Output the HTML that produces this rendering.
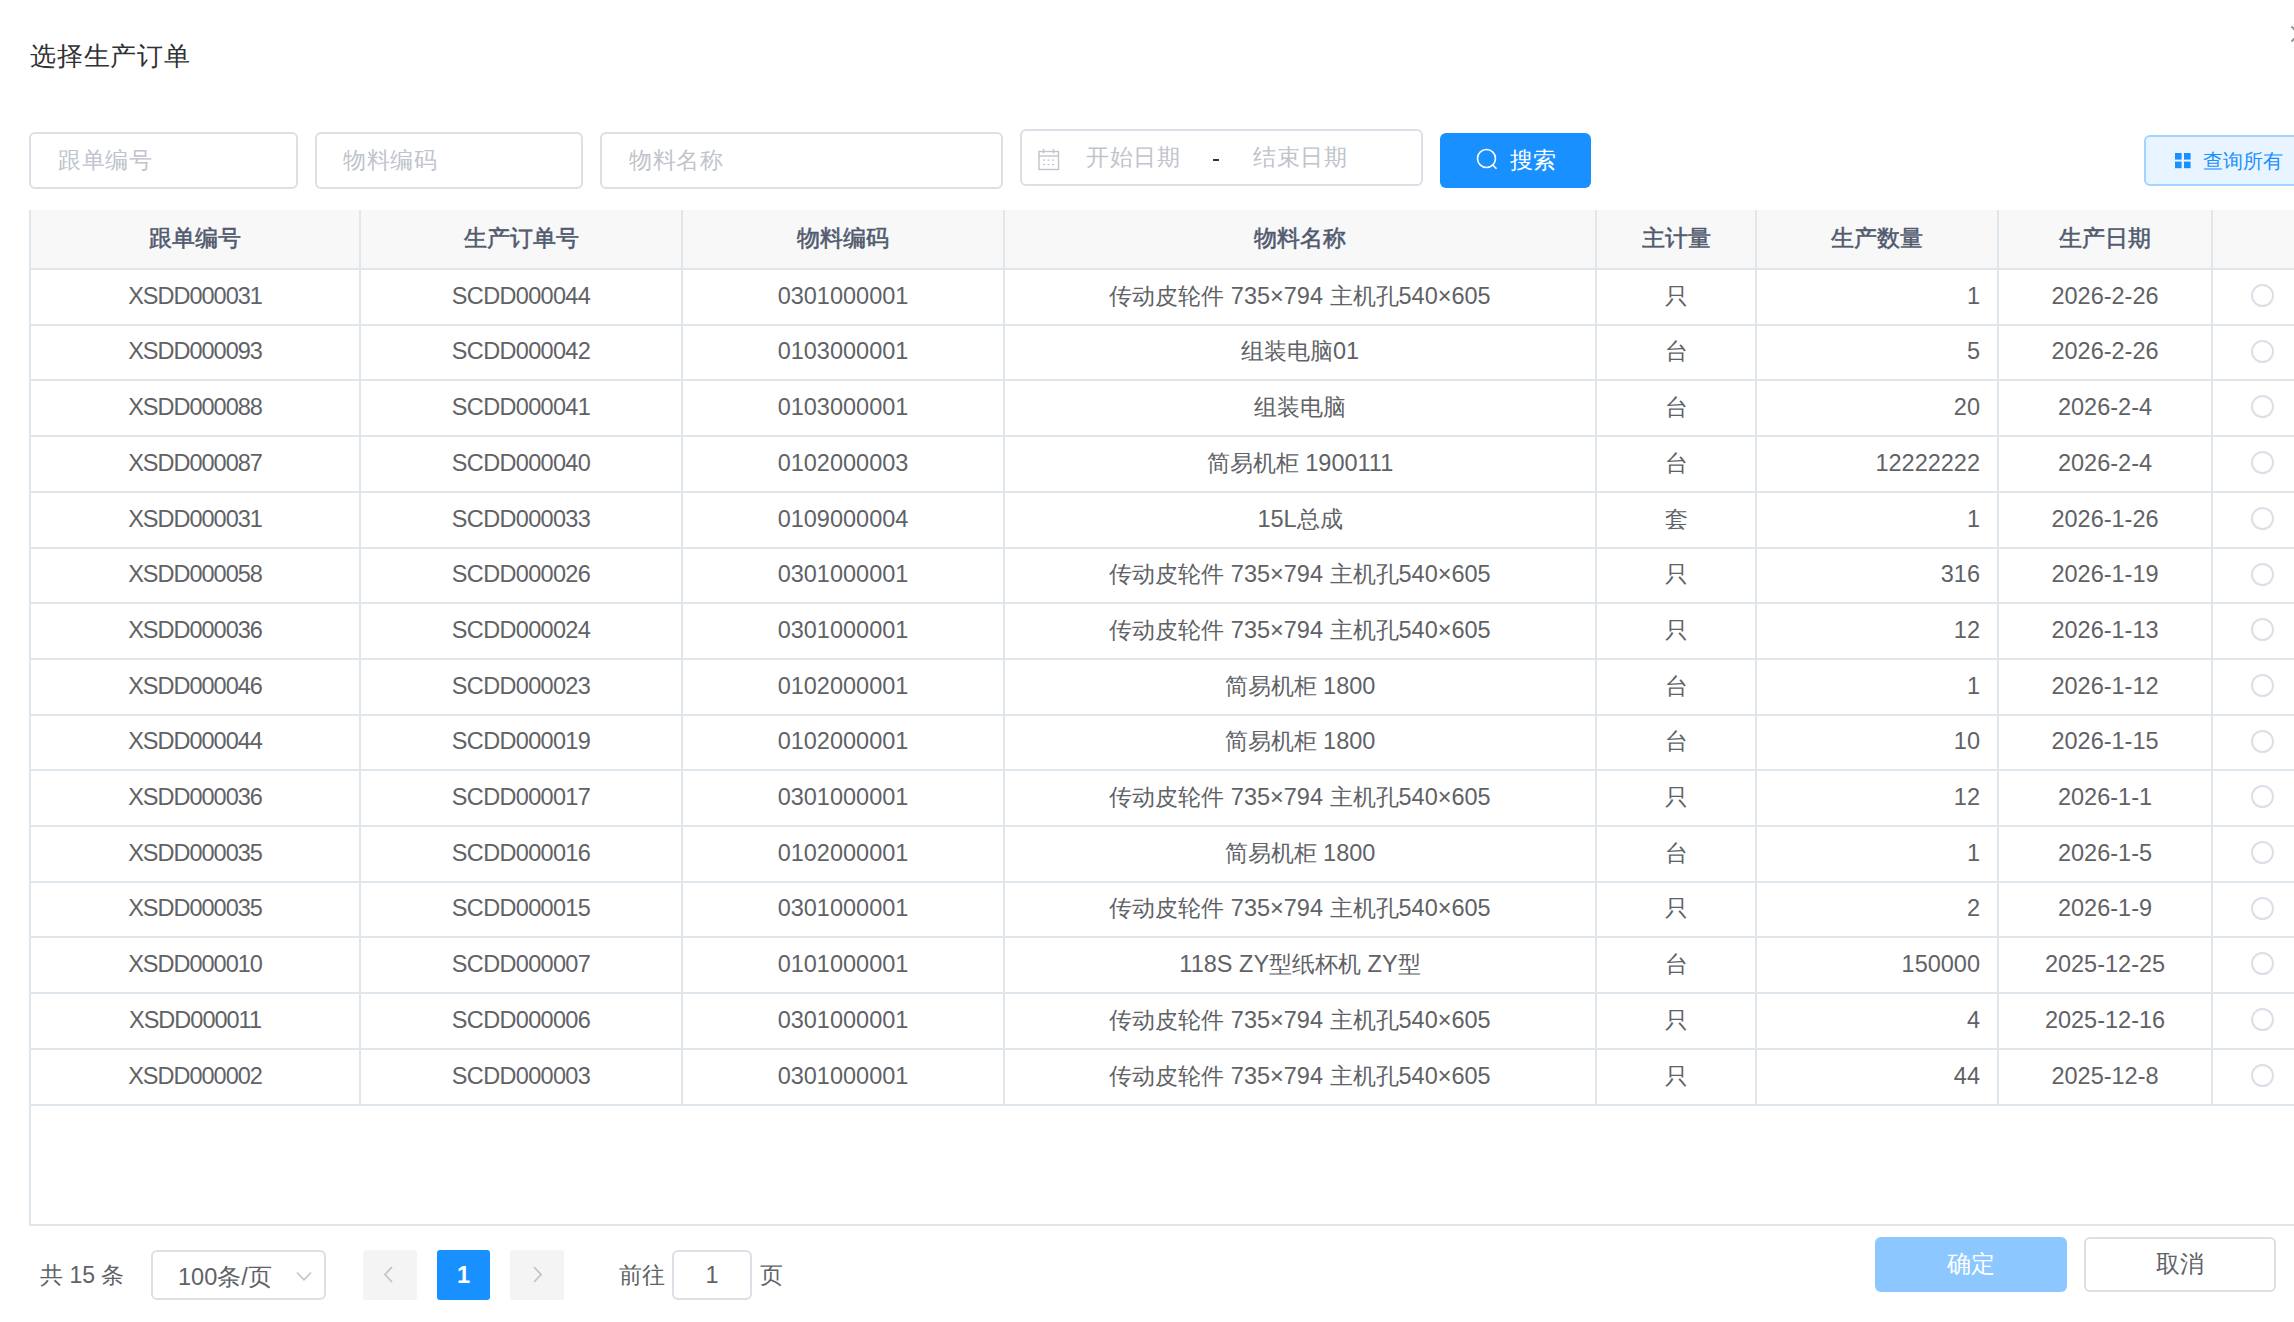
<!DOCTYPE html>
<html>
<head>
<meta charset="utf-8">
<style>
html,body{margin:0;padding:0;}
body{width:2294px;height:1322px;overflow:hidden;position:relative;background:#fff;font-family:"Liberation Sans",sans-serif;color:#606266;}
.abs{position:absolute;white-space:nowrap;}
.title{position:absolute;left:30px;top:36px;font-size:26px;letter-spacing:0.8px;line-height:40px;color:#303133;white-space:nowrap;}
.close{position:absolute;left:2286px;top:22px;width:24px;height:24px;}
.inp{position:absolute;box-sizing:border-box;border:2px solid #DCDFE6;border-radius:6px;background:#fff;}
.ph{position:absolute;white-space:nowrap;font-size:23px;letter-spacing:0.6px;color:#C0C4CC;line-height:30px;}
.btn{position:absolute;box-sizing:border-box;border-radius:6px;}
.table-wrap{position:absolute;left:29px;top:210px;width:2265px;height:1016px;}
.thead{position:absolute;left:31px;top:210px;width:2263px;height:58px;background:#F8F8F9;}
.th{position:absolute;top:209px;height:58px;line-height:58px;text-align:center;font-size:23px;font-weight:normal;-webkit-text-stroke:0.55px #515A6E;color:#515A6E;white-space:nowrap;}
.hl{position:absolute;left:29px;width:2265px;height:2px;background:#DFE6EC;}
.vl{position:absolute;top:210px;width:2px;height:896px;background:#DFE6EC;}
.tr{position:absolute;left:0;width:2294px;}
.td{position:absolute;top:-1px;height:100%;text-align:center;font-size:23.5px;color:#606266;white-space:nowrap;}
.td .c{font-size:22.7px;}
.td.num{text-align:right;box-sizing:border-box;padding-right:17px;}
.radio{position:absolute;left:2251px;width:23px;height:23px;box-sizing:border-box;border:2px solid #DCDFE6;border-radius:50%;}
.pg{position:absolute;white-space:nowrap;font-size:23.5px;color:#606266;line-height:30px;}
</style>
</head>
<body>
<div class="title">选择生产订单</div>
<svg class="close" viewBox="0 0 24 24"><path d="M5.5 4.5 L20.5 19.5 M20.5 4.5 L5.5 19.5" stroke="#909399" stroke-width="2" fill="none"/></svg>

<!-- filters -->
<div class="inp" style="left:29px;top:132px;width:269px;height:57px;"></div>
<div class="ph" style="left:58px;top:145px;">跟单编号</div>
<div class="inp" style="left:315px;top:132px;width:268px;height:57px;"></div>
<div class="ph" style="left:343px;top:145px;">物料编码</div>
<div class="inp" style="left:600px;top:132px;width:403px;height:57px;"></div>
<div class="ph" style="left:629px;top:145px;">物料名称</div>

<div class="inp" style="left:1020px;top:129px;width:403px;height:57px;"></div>
<svg class="abs" style="left:1037px;top:147.5px;" width="23" height="23" viewBox="0 0 23 23">
  <rect x="2" y="3.5" width="19.5" height="18" fill="none" stroke="#C0C4CC" stroke-width="1.4"/>
  <line x1="2" y1="8" x2="21.5" y2="8" stroke="#C0C4CC" stroke-width="1.4"/>
  <line x1="6.5" y1="1" x2="6.5" y2="5.5" stroke="#C0C4CC" stroke-width="1.4"/>
  <line x1="16.5" y1="1" x2="16.5" y2="5.5" stroke="#C0C4CC" stroke-width="1.4"/>
  <g fill="#C0C4CC"><rect x="6" y="11.5" width="2" height="1.2"/><rect x="10.5" y="11.5" width="2" height="1.2"/><rect x="15" y="11.5" width="2" height="1.2"/><rect x="6" y="16" width="2" height="1.2"/><rect x="10.5" y="16" width="2" height="1.2"/><rect x="15" y="16" width="2" height="1.2"/></g>
</svg>
<div class="ph" style="left:1086px;top:141.5px;">开始日期</div>
<div class="abs" style="left:1213px;top:159px;width:6px;height:2px;background:#303133;"></div>
<div class="ph" style="left:1253px;top:141.5px;">结束日期</div>

<div class="btn" style="left:1440px;top:133px;width:151px;height:55px;background:#1890FF;"></div>
<svg class="abs" style="left:1474px;top:147px;" width="26" height="26" viewBox="0 0 26 26">
  <circle cx="12.5" cy="11.5" r="9" fill="none" stroke="#fff" stroke-width="1.6"/>
  <line x1="18.8" y1="18" x2="22.5" y2="21.8" stroke="#fff" stroke-width="1.6"/>
</svg>
<div class="pg" style="left:1510px;top:145px;color:#fff;font-size:23px;">搜索</div>

<div class="btn" style="left:2144px;top:135px;width:220px;height:51px;background:#E8F4FF;border:2px solid #A3D3FF;"></div>
<svg class="abs" style="left:2175px;top:153px;" width="16" height="16" viewBox="0 0 16 16">
  <g fill="#1890FF"><rect x="0" y="0" width="6.6" height="6.6"/><rect x="9" y="0" width="6.6" height="6.6"/><rect x="0" y="8.6" width="6.6" height="6.6"/><rect x="9" y="8.6" width="6.6" height="6.6"/></g>
</svg>
<div class="abs" style="left:2203px;top:146px;font-size:20px;line-height:30px;color:#1890FF;">查询所有</div>

<!-- table -->
<div class="thead"></div>
<div class="abs" style="left:29px;top:210px;width:2px;height:1016px;background:#DFE6EC;"></div>
<div class="abs" style="left:29px;top:1224px;width:2265px;height:2px;background:#DFE6EC;"></div>
<div class="th" style="left:31px;width:328px">跟单编号</div>
<div class="th" style="left:361px;width:320px">生产订单号</div>
<div class="th" style="left:683px;width:320px">物料编码</div>
<div class="th" style="left:1005px;width:590px">物料名称</div>
<div class="th" style="left:1597px;width:158px">主计量</div>
<div class="th" style="left:1757px;width:240px">生产数量</div>
<div class="th" style="left:1999px;width:212px">生产日期</div>
<div class="hl" style="top:268px"></div>
<div class="hl" style="top:324px"></div>
<div class="hl" style="top:379px"></div>
<div class="hl" style="top:435px"></div>
<div class="hl" style="top:491px"></div>
<div class="hl" style="top:547px"></div>
<div class="hl" style="top:602px"></div>
<div class="hl" style="top:658px"></div>
<div class="hl" style="top:714px"></div>
<div class="hl" style="top:769px"></div>
<div class="hl" style="top:825px"></div>
<div class="hl" style="top:881px"></div>
<div class="hl" style="top:936px"></div>
<div class="hl" style="top:992px"></div>
<div class="hl" style="top:1048px"></div>
<div class="hl" style="top:1104px"></div>
<div class="vl" style="left:359px"></div>
<div class="vl" style="left:681px"></div>
<div class="vl" style="left:1003px"></div>
<div class="vl" style="left:1595px"></div>
<div class="vl" style="left:1755px"></div>
<div class="vl" style="left:1997px"></div>
<div class="vl" style="left:2211px"></div>
<div class="tr" style="top:270px;height:54px;line-height:54px"><div class="td" style="left:31px;width:328px;letter-spacing:-1px;">XSDD000031</div><div class="td" style="left:361px;width:320px;letter-spacing:-0.67px;">SCDD000044</div><div class="td" style="left:683px;width:320px;">0301000001</div><div class="td" style="left:1005px;width:590px;"><span class="c">传动皮轮件</span> 735×794 <span class="c">主机孔</span>540×605</div><div class="td" style="left:1597px;width:158px;"><span class="c">只</span></div><div class="td num" style="left:1757px;width:240px;">1</div><div class="td" style="left:1999px;width:212px;">2026-2-26</div><div class="radio" style="top:14.0px"></div></div>
<div class="tr" style="top:326px;height:53px;line-height:53px"><div class="td" style="left:31px;width:328px;letter-spacing:-1px;">XSDD000093</div><div class="td" style="left:361px;width:320px;letter-spacing:-0.67px;">SCDD000042</div><div class="td" style="left:683px;width:320px;">0103000001</div><div class="td" style="left:1005px;width:590px;"><span class="c">组装电脑</span>01</div><div class="td" style="left:1597px;width:158px;"><span class="c">台</span></div><div class="td num" style="left:1757px;width:240px;">5</div><div class="td" style="left:1999px;width:212px;">2026-2-26</div><div class="radio" style="top:13.5px"></div></div>
<div class="tr" style="top:381px;height:54px;line-height:54px"><div class="td" style="left:31px;width:328px;letter-spacing:-1px;">XSDD000088</div><div class="td" style="left:361px;width:320px;letter-spacing:-0.67px;">SCDD000041</div><div class="td" style="left:683px;width:320px;">0103000001</div><div class="td" style="left:1005px;width:590px;"><span class="c">组装电脑</span></div><div class="td" style="left:1597px;width:158px;"><span class="c">台</span></div><div class="td num" style="left:1757px;width:240px;">20</div><div class="td" style="left:1999px;width:212px;">2026-2-4</div><div class="radio" style="top:14.0px"></div></div>
<div class="tr" style="top:437px;height:54px;line-height:54px"><div class="td" style="left:31px;width:328px;letter-spacing:-1px;">XSDD000087</div><div class="td" style="left:361px;width:320px;letter-spacing:-0.67px;">SCDD000040</div><div class="td" style="left:683px;width:320px;">0102000003</div><div class="td" style="left:1005px;width:590px;"><span class="c">简易机柜</span> 1900111</div><div class="td" style="left:1597px;width:158px;"><span class="c">台</span></div><div class="td num" style="left:1757px;width:240px;">12222222</div><div class="td" style="left:1999px;width:212px;">2026-2-4</div><div class="radio" style="top:14.0px"></div></div>
<div class="tr" style="top:493px;height:54px;line-height:54px"><div class="td" style="left:31px;width:328px;letter-spacing:-1px;">XSDD000031</div><div class="td" style="left:361px;width:320px;letter-spacing:-0.67px;">SCDD000033</div><div class="td" style="left:683px;width:320px;">0109000004</div><div class="td" style="left:1005px;width:590px;">15L<span class="c">总成</span></div><div class="td" style="left:1597px;width:158px;"><span class="c">套</span></div><div class="td num" style="left:1757px;width:240px;">1</div><div class="td" style="left:1999px;width:212px;">2026-1-26</div><div class="radio" style="top:14.0px"></div></div>
<div class="tr" style="top:549px;height:53px;line-height:53px"><div class="td" style="left:31px;width:328px;letter-spacing:-1px;">XSDD000058</div><div class="td" style="left:361px;width:320px;letter-spacing:-0.67px;">SCDD000026</div><div class="td" style="left:683px;width:320px;">0301000001</div><div class="td" style="left:1005px;width:590px;"><span class="c">传动皮轮件</span> 735×794 <span class="c">主机孔</span>540×605</div><div class="td" style="left:1597px;width:158px;"><span class="c">只</span></div><div class="td num" style="left:1757px;width:240px;">316</div><div class="td" style="left:1999px;width:212px;">2026-1-19</div><div class="radio" style="top:13.5px"></div></div>
<div class="tr" style="top:604px;height:54px;line-height:54px"><div class="td" style="left:31px;width:328px;letter-spacing:-1px;">XSDD000036</div><div class="td" style="left:361px;width:320px;letter-spacing:-0.67px;">SCDD000024</div><div class="td" style="left:683px;width:320px;">0301000001</div><div class="td" style="left:1005px;width:590px;"><span class="c">传动皮轮件</span> 735×794 <span class="c">主机孔</span>540×605</div><div class="td" style="left:1597px;width:158px;"><span class="c">只</span></div><div class="td num" style="left:1757px;width:240px;">12</div><div class="td" style="left:1999px;width:212px;">2026-1-13</div><div class="radio" style="top:14.0px"></div></div>
<div class="tr" style="top:660px;height:54px;line-height:54px"><div class="td" style="left:31px;width:328px;letter-spacing:-1px;">XSDD000046</div><div class="td" style="left:361px;width:320px;letter-spacing:-0.67px;">SCDD000023</div><div class="td" style="left:683px;width:320px;">0102000001</div><div class="td" style="left:1005px;width:590px;"><span class="c">简易机柜</span> 1800</div><div class="td" style="left:1597px;width:158px;"><span class="c">台</span></div><div class="td num" style="left:1757px;width:240px;">1</div><div class="td" style="left:1999px;width:212px;">2026-1-12</div><div class="radio" style="top:14.0px"></div></div>
<div class="tr" style="top:716px;height:53px;line-height:53px"><div class="td" style="left:31px;width:328px;letter-spacing:-1px;">XSDD000044</div><div class="td" style="left:361px;width:320px;letter-spacing:-0.67px;">SCDD000019</div><div class="td" style="left:683px;width:320px;">0102000001</div><div class="td" style="left:1005px;width:590px;"><span class="c">简易机柜</span> 1800</div><div class="td" style="left:1597px;width:158px;"><span class="c">台</span></div><div class="td num" style="left:1757px;width:240px;">10</div><div class="td" style="left:1999px;width:212px;">2026-1-15</div><div class="radio" style="top:13.5px"></div></div>
<div class="tr" style="top:771px;height:54px;line-height:54px"><div class="td" style="left:31px;width:328px;letter-spacing:-1px;">XSDD000036</div><div class="td" style="left:361px;width:320px;letter-spacing:-0.67px;">SCDD000017</div><div class="td" style="left:683px;width:320px;">0301000001</div><div class="td" style="left:1005px;width:590px;"><span class="c">传动皮轮件</span> 735×794 <span class="c">主机孔</span>540×605</div><div class="td" style="left:1597px;width:158px;"><span class="c">只</span></div><div class="td num" style="left:1757px;width:240px;">12</div><div class="td" style="left:1999px;width:212px;">2026-1-1</div><div class="radio" style="top:14.0px"></div></div>
<div class="tr" style="top:827px;height:54px;line-height:54px"><div class="td" style="left:31px;width:328px;letter-spacing:-1px;">XSDD000035</div><div class="td" style="left:361px;width:320px;letter-spacing:-0.67px;">SCDD000016</div><div class="td" style="left:683px;width:320px;">0102000001</div><div class="td" style="left:1005px;width:590px;"><span class="c">简易机柜</span> 1800</div><div class="td" style="left:1597px;width:158px;"><span class="c">台</span></div><div class="td num" style="left:1757px;width:240px;">1</div><div class="td" style="left:1999px;width:212px;">2026-1-5</div><div class="radio" style="top:14.0px"></div></div>
<div class="tr" style="top:883px;height:53px;line-height:53px"><div class="td" style="left:31px;width:328px;letter-spacing:-1px;">XSDD000035</div><div class="td" style="left:361px;width:320px;letter-spacing:-0.67px;">SCDD000015</div><div class="td" style="left:683px;width:320px;">0301000001</div><div class="td" style="left:1005px;width:590px;"><span class="c">传动皮轮件</span> 735×794 <span class="c">主机孔</span>540×605</div><div class="td" style="left:1597px;width:158px;"><span class="c">只</span></div><div class="td num" style="left:1757px;width:240px;">2</div><div class="td" style="left:1999px;width:212px;">2026-1-9</div><div class="radio" style="top:13.5px"></div></div>
<div class="tr" style="top:938px;height:54px;line-height:54px"><div class="td" style="left:31px;width:328px;letter-spacing:-1px;">XSDD000010</div><div class="td" style="left:361px;width:320px;letter-spacing:-0.67px;">SCDD000007</div><div class="td" style="left:683px;width:320px;">0101000001</div><div class="td" style="left:1005px;width:590px;">118S ZY<span class="c">型纸杯机</span> ZY<span class="c">型</span></div><div class="td" style="left:1597px;width:158px;"><span class="c">台</span></div><div class="td num" style="left:1757px;width:240px;">150000</div><div class="td" style="left:1999px;width:212px;">2025-12-25</div><div class="radio" style="top:14.0px"></div></div>
<div class="tr" style="top:994px;height:54px;line-height:54px"><div class="td" style="left:31px;width:328px;letter-spacing:-1px;">XSDD000011</div><div class="td" style="left:361px;width:320px;letter-spacing:-0.67px;">SCDD000006</div><div class="td" style="left:683px;width:320px;">0301000001</div><div class="td" style="left:1005px;width:590px;"><span class="c">传动皮轮件</span> 735×794 <span class="c">主机孔</span>540×605</div><div class="td" style="left:1597px;width:158px;"><span class="c">只</span></div><div class="td num" style="left:1757px;width:240px;">4</div><div class="td" style="left:1999px;width:212px;">2025-12-16</div><div class="radio" style="top:14.0px"></div></div>
<div class="tr" style="top:1050px;height:54px;line-height:54px"><div class="td" style="left:31px;width:328px;letter-spacing:-1px;">XSDD000002</div><div class="td" style="left:361px;width:320px;letter-spacing:-0.67px;">SCDD000003</div><div class="td" style="left:683px;width:320px;">0301000001</div><div class="td" style="left:1005px;width:590px;"><span class="c">传动皮轮件</span> 735×794 <span class="c">主机孔</span>540×605</div><div class="td" style="left:1597px;width:158px;"><span class="c">只</span></div><div class="td num" style="left:1757px;width:240px;">44</div><div class="td" style="left:1999px;width:212px;">2025-12-8</div><div class="radio" style="top:14.0px"></div></div>

<!-- pagination -->
<div class="pg" style="left:40px;top:1260px;font-size:23px;">共 15 条</div>
<div class="inp" style="left:151px;top:1250px;width:175px;height:50px;"></div>
<div class="pg" style="left:178px;top:1261.5px;">100条/页</div>
<svg class="abs" style="left:296px;top:1271px;" width="16" height="11" viewBox="0 0 16 11"><path d="M1 1.5 L8 8.8 L15 1.5" fill="none" stroke="#C0C4CC" stroke-width="1.5"/></svg>
<div class="btn" style="left:363px;top:1250px;width:54px;height:50px;background:#F4F4F5;border-radius:3px;"></div>
<svg class="abs" style="left:382px;top:1265px;" width="13" height="19" viewBox="0 0 13 19"><path d="M10 2 L3 9.5 L10 17" fill="none" stroke="#C0C4CC" stroke-width="1.8"/></svg>
<div class="btn" style="left:437px;top:1250px;width:53px;height:50px;background:#1890FF;border-radius:3px;"></div>
<div class="pg" style="left:437px;top:1260px;width:53px;text-align:center;color:#fff;font-weight:bold;">1</div>
<div class="btn" style="left:510px;top:1250px;width:54px;height:50px;background:#F4F4F5;border-radius:3px;"></div>
<svg class="abs" style="left:531px;top:1265px;" width="13" height="19" viewBox="0 0 13 19"><path d="M3 2 L10 9.5 L3 17" fill="none" stroke="#C0C4CC" stroke-width="1.8"/></svg>
<div class="pg" style="left:619px;top:1260px;font-size:23px;">前往</div>
<div class="inp" style="left:672px;top:1250px;width:80px;height:50px;"></div>
<div class="pg" style="left:672px;top:1260px;width:80px;text-align:center;">1</div>
<div class="pg" style="left:760px;top:1260px;font-size:23px;">页</div>

<!-- footer buttons -->
<div class="btn" style="left:1875px;top:1237px;width:192px;height:55px;background:#8CC8FF;"></div>
<div class="pg" style="left:1875px;top:1249px;width:192px;text-align:center;color:#fff;">确定</div>
<div class="inp" style="left:2084px;top:1237px;width:192px;height:55px;"></div>
<div class="pg" style="left:2084px;top:1249px;width:192px;text-align:center;">取消</div>
</body>
</html>
